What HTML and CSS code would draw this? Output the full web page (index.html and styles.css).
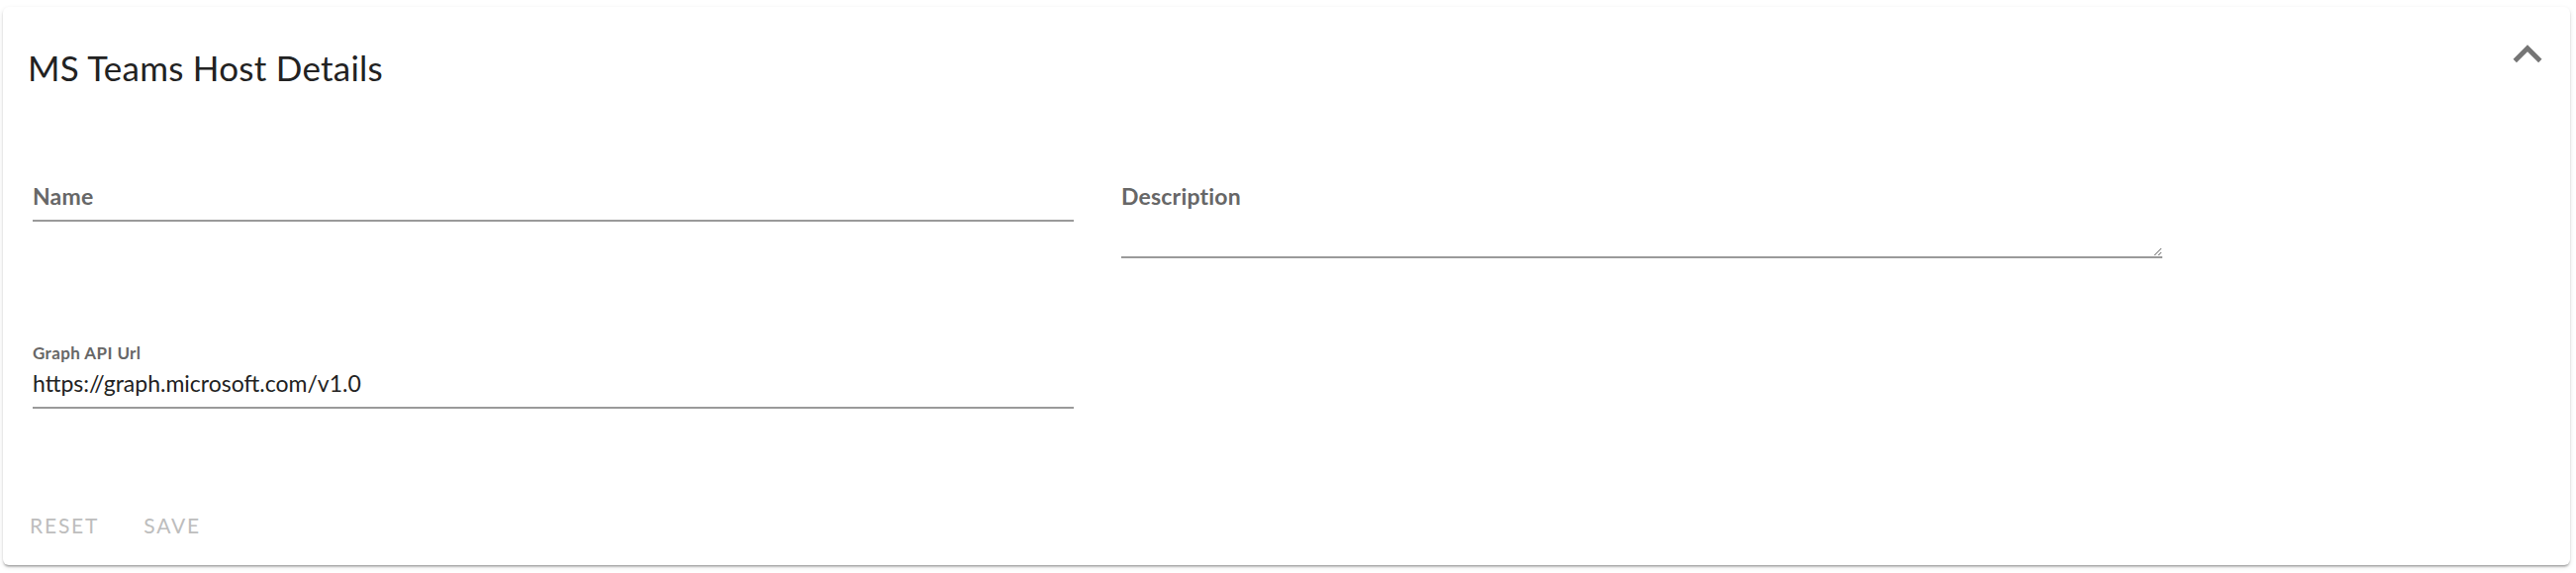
FILE: index.html
```html
<!DOCTYPE html>
<html lang="en">
<head>
<meta charset="utf-8">
<title>MS Teams Host Details</title>
<link rel="stylesheet" href="styles.css">
</head>
<body>
<section class="card">
  <header class="card-header">
    <h2 class="card-title">MS Teams Host Details</h2>
    <button class="icon-btn" type="button" aria-label="Collapse">
      <svg class="chevron" viewBox="0 0 24 24" width="58" height="58"><path d="M12 8l-6 6 1.41 1.41L12 10.83l4.59 4.58L18 14z" fill="#757575"/></svg>
    </button>
  </header>
  <form class="form">
    <div class="grid">
      <div class="field">
        <label class="label label-inline" for="name">Name</label>
        <input class="input" id="name" type="text">
      </div>
      <div class="field">
        <label class="label label-inline" for="desc">Description</label>
        <textarea class="input textarea" id="desc"></textarea>
      </div>
      <div class="field">
        <label class="label label-shrunk" for="url">Graph API Url</label>
        <input class="input" id="url" type="text" value="https://graph.microsoft.com/v1.0">
      </div>
    </div>
    <div class="actions">
      <button class="text-btn" type="button" disabled>Reset</button>
      <button class="text-btn" type="button" disabled>Save</button>
    </div>
  </form>
</section>
</body>
</html>
```

FILE: styles.css
```css
* { box-sizing: border-box; }

html, body {
  margin: 0;
  background: #ffffff;
}

body {
  padding: 7px 6px 8px 3px;
  font-family: Lato, "Open Sans", Arial, sans-serif;
}

.card {
  background: #fff;
  border-radius: 6px;
  height: 564px;
  box-shadow: 0 3px 2px -2px rgba(0,0,0,0.2), 0 2px 2px 0 rgba(0,0,0,0.14), 0 2px 5px 0 rgba(0,0,0,0.12);
  display: flex;
  flex-direction: column;
}

.card-header {
  display: flex;
  justify-content: space-between;
  align-items: flex-start;
  padding: 19px 14px 0 25px;
}

.card-title {
  margin: 22px 0 0;
  font-size: 35px;
  line-height: 40px;
  letter-spacing: 0.25px;
  font-weight: 400;
  color: #222;
}

.icon-btn {
  border: 0;
  background: none;
  padding: 0;
  width: 58px;
  height: 58px;
  display: flex;
}

.form {
  padding: 70px 30px 0 30px;
  display: flex;
  flex-direction: column;
  flex: 1;
}

.grid {
  display: grid;
  grid-template-columns: 1052px 1052px;
  column-gap: 48px;
  row-gap: 86px;
  align-items: start;
}

.field {
  position: relative;
  padding-top: 20px;
  display: flex;
  flex-direction: column;
}

.label {
  position: absolute;
  left: 0;
  font-weight: 700;
  color: #676767;
}

.label-inline {
  top: 26px;
  font-size: 23px;
  line-height: 28px;
  letter-spacing: 0.2px;
}

.label-shrunk {
  top: 0;
  font-size: 17px;
  line-height: 20px;
  letter-spacing: 0.4px;
}

.input {
  font-family: inherit;
  font-size: 23px;
  line-height: 28px;
  height: 46px;
  padding: 6px 0 10px;
  border: 0;
  border-bottom: 2px solid #9a9a9a;
  color: #222;
  background: transparent;
  outline: none;
  width: 100%;
}

.textarea {
  height: 83px;
  resize: vertical;
  display: block;
}

.actions {
  display: flex;
  gap: 29px;
  margin-top: 100px;
  margin-left: -11px;
}

.text-btn {
  font-family: inherit;
  text-transform: uppercase;
  font-size: 21px;
  letter-spacing: 1.8px;
  line-height: 36px;
  padding: 0 8px;
  border: 0;
  background: none;
  color: #bdbdbd;
}
```
